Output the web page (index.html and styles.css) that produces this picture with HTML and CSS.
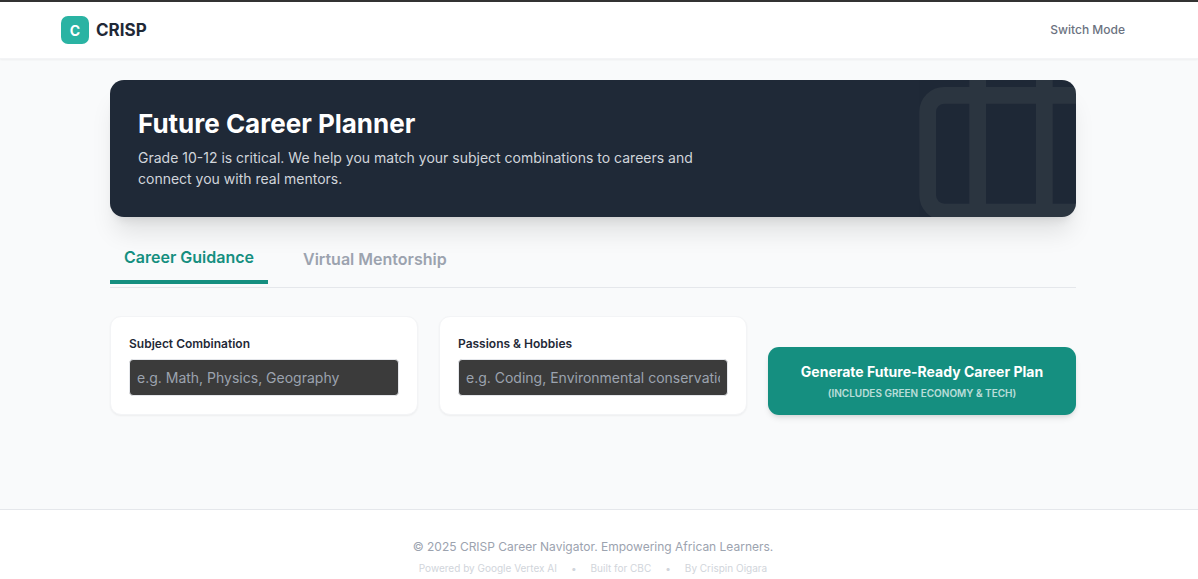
FILE: index.html
```html
<!DOCTYPE html>
<html lang="en">
<head>
    <meta charset="UTF-8">
    <meta name="viewport" content="width=device-width, initial-scale=1.0">
    <title>CRISP Career Navigator</title>
    <link rel="stylesheet" href="styles.css">
</head>
<body>
    <header class="site-header">
        <div class="header-inner">
            <a class="brand" href="#">
                <span class="brand-logo">C</span>
                <span class="brand-name">CRISP</span>
            </a>
            <button type="button" class="switch-mode">Switch Mode</button>
        </div>
    </header>

    <main class="site-main">
        <div class="content">
            <section class="banner">
                <h1>Future Career Planner</h1>
                <p>Grade 10-12 is critical. We help you match your subject combinations to careers and connect you with real mentors.</p>
                <!-- Briefcase in the corner -->
                <svg class="banner-icon" viewBox="0 0 24 24" fill="none" stroke="currentColor" stroke-width="2" stroke-linecap="round" stroke-linejoin="round" aria-hidden="true">
                    <rect x="2" y="7" width="20" height="14" rx="2" ry="2"></rect>
                    <path d="M16 21V5a2 2 0 0 0-2-2h-4a2 2 0 0 0-2 2v16"></path>
                </svg>
            </section>

            <nav class="tabs">
                <button type="button" class="tab active">Career Guidance</button>
                <button type="button" class="tab">Virtual Mentorship</button>
            </nav>

            <form class="planner">
                <div class="card">
                    <label for="subjects">Subject Combination</label>
                    <input type="text" id="subjects" name="subjects" placeholder="e.g. Math, Physics, Geography">
                </div>
                <div class="card">
                    <label for="passions">Passions &amp; Hobbies</label>
                    <input type="text" id="passions" name="passions" placeholder="e.g. Coding, Environmental conservation">
                </div>
                <button type="button" class="generate">
                    <span class="generate-title">Generate Future-Ready Career Plan</span>
                    <span class="generate-note">(Includes Green Economy &amp; Tech)</span>
                </button>
            </form>
        </div>
    </main>

    <footer class="site-footer">
        <p class="copyright">© 2025 CRISP Career Navigator. Empowering African Learners.</p>
        <div class="credits">
            <span>Powered by Google Vertex AI</span>
            <span>•</span>
            <span>Built for CBC</span>
            <span>•</span>
            <span>By Crispin Oigara</span>
        </div>
    </footer>
</body>
</html>
```
FILE: styles.css
```css
* {
    box-sizing: border-box;
}
body {
    margin: 0;
    border-top: 2px solid #333;
    font-family: Inter, sans-serif;
    font-size: 14px;
    line-height: 21px;
    color: #1f2937;
    background-color: #f9fafb;
}
h1, p {
    margin: 0;
}
button, input {
    font-family: inherit;
}
button {
    border: none;
    background: none;
    cursor: pointer;
}

.site-header, .site-main, .site-footer {
    padding-right: 12px;
}
.site-header {
    background-color: white;
    border-bottom: 1px solid #f3f4f6;
    box-shadow: 0 1px 2px rgba(0, 0, 0, 0.05);
}
.header-inner {
    display: flex;
    justify-content: space-between;
    align-items: center;
    max-width: 1120px;
    height: 56px;
    margin: 0 auto;
    padding: 0 28px;
}
.brand {
    display: flex;
    align-items: center;
    gap: 7px;
    color: #1f2937;
    text-decoration: none;
}
.brand-logo {
    display: flex;
    justify-content: center;
    align-items: center;
    width: 28px;
    height: 28px;
    border-radius: 7px;
    background-color: #2ab3a3;
    color: white;
    font-weight: 700;
}
.brand-name {
    font-size: 17px;
    line-height: 24px;
    font-weight: 700;
}
.switch-mode {
    padding: 0;
    font-size: 12px;
    line-height: 18px;
    font-weight: 500;
    color: #6b7280;
}

.content {
    max-width: 1008px;
    margin: 0 auto;
    padding: 21px 21px 94px;
}
.banner {
    position: relative;
    overflow: hidden;
    margin-bottom: 28px;
    padding: 28px;
    border-radius: 14px;
    background-color: #1f2937;
    color: white;
    box-shadow: 0 20px 25px -5px rgba(0, 0, 0, 0.1), 0 8px 10px -6px rgba(0, 0, 0, 0.1);
}
.banner h1 {
    margin-bottom: 7px;
    font-size: 26px;
    line-height: 32px;
    font-weight: 700;
}
.banner p {
    max-width: 588px;
    color: #d1d5db;
}
.banner-icon {
    position: absolute;
    top: -43px;
    right: -35px;
    width: 200px;
    height: 200px;
    color: #9ca38f;
    opacity: 0.1;
}

.tabs {
    display: flex;
    gap: 21px;
    margin-bottom: 28px;
    padding-bottom: 3px;
    border-bottom: 1px solid #e5e7eb;
}
.tab {
    padding: 0 14px 11px;
    font-size: 16px;
    line-height: 24px;
    font-weight: 600;
    color: #9ca3af;
}
.tab.active {
    border-bottom: 4px solid #158f80;
    color: #158f80;
}

.planner {
    display: grid;
    grid-template-columns: repeat(3, minmax(0, 1fr));
    align-items: end;
    gap: 21px;
}
.card {
    padding: 18px;
    border: 1px solid #f3f4f6;
    border-radius: 11px;
    background-color: white;
    box-shadow: 0 1px 2px rgba(0, 0, 0, 0.05);
}
.card label {
    display: block;
    margin-bottom: 6px;
    font-size: 12px;
    line-height: 18px;
    font-weight: 600;
}
.card input {
    display: block;
    width: 100%;
    height: 37px;
    padding: 7px;
    border: 1px solid #e5e7eb;
    border-radius: 4px;
    background-color: #3b3b3b;
    color: white;
    font-size: 14px;
}
.card input::placeholder {
    color: #9ca3af;
}
.generate {
    display: flex;
    flex-direction: column;
    align-items: center;
    gap: 4px;
    padding: 14px;
    border-radius: 11px;
    background-color: #158f80;
    color: white;
    box-shadow: 0 4px 6px -1px rgba(0, 0, 0, 0.1), 0 2px 4px -2px rgba(0, 0, 0, 0.1);
}
.generate-title {
    font-size: 14px;
    line-height: 21px;
    font-weight: 700;
}
.generate-note {
    font-size: 10px;
    line-height: 15px;
    font-weight: 600;
    text-transform: uppercase;
    opacity: 0.7;
}

.site-footer {
    padding-top: 28px;
    padding-bottom: 28px;
    border-top: 1px solid #e5e7eb;
    background-color: white;
    text-align: center;
}
.copyright {
    margin-bottom: 4px;
    font-size: 12px;
    line-height: 18px;
    color: #9ca3af;
}
.credits {
    display: flex;
    justify-content: center;
    gap: 14px;
    font-size: 10px;
    line-height: 16px;
    color: #d1d5db;
}
```
